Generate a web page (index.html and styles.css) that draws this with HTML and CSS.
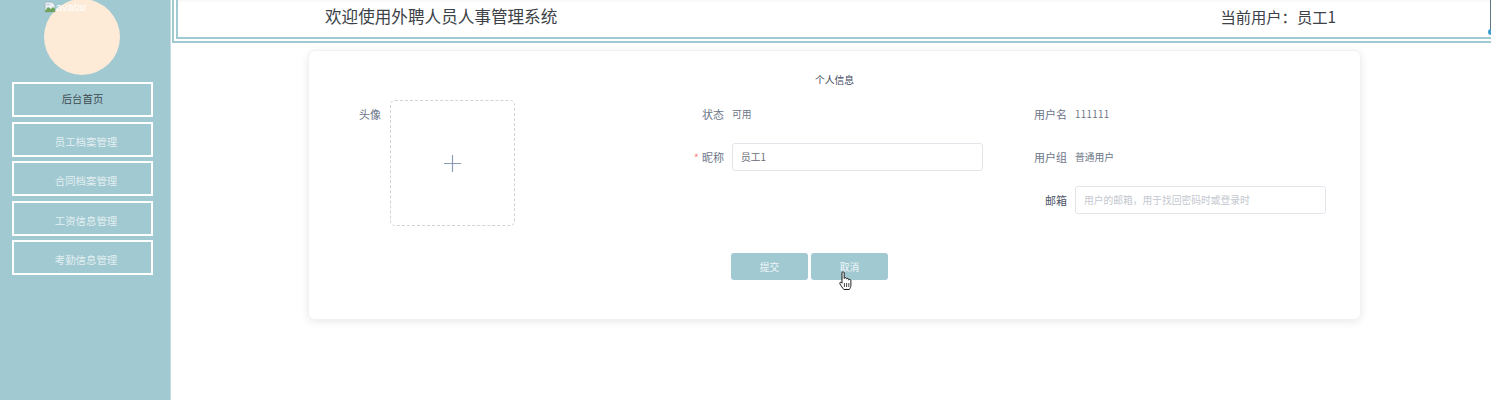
FILE: index.html
```html
<!DOCTYPE html>
<html lang="zh-CN">
<head>
<meta charset="utf-8">
<title>外聘人员人事管理系统</title>
<link rel="stylesheet" href="styles.css">
</head>
<body>
<div class="layout">
  <aside class="sidebar">
    <div class="avatar">
      <span class="alt">
        <svg class="alt-icon" width="12" height="12" viewBox="0 0 12 12"><path d="M1 1h7l3 3v7H1z" fill="#e8eef2" stroke="#9fb0b8" stroke-width=".8"/><path d="M1 10l3-4 3 2 2-2 2 2v3H1z" fill="#6ea35c"/><path d="M2 4c1-1.500 3-1.500 4 0z" fill="#9cc0e6"/></svg>avatar
      </span>
    </div>
    <nav class="menu">
      <a class="menu-item home">后台首页</a>
      <a class="menu-item">员工档案管理</a>
      <a class="menu-item">合同档案管理</a>
      <a class="menu-item">工资信息管理</a>
      <a class="menu-item">考勤信息管理</a>
    </nav>
  </aside>
  <main class="main">
    <header class="header">
      <span class="welcome">欢迎使用外聘人员人事管理系统</span>
      <span class="user">当前用户：员工1</span>
      <i class="edge"></i>
      <i class="dot"></i>
    </header>
    <section class="card">
      <h2 class="card-title">个人信息</h2>
      <form class="form">
        <div class="field upload-field">
          <label class="label">头像</label>
          <div class="upload">
            <svg width="17" height="17" viewBox="0 0 17 17"><path d="M8.500 0v17M0 8.500h17" stroke="#8c9db5" stroke-width="1.200" fill="none"/></svg>
          </div>
        </div>
        <div class="field">
          <label class="label">状态</label>
          <span class="value">可用</span>
        </div>
        <div class="field">
          <label class="label">用户名</label>
          <span class="value digits">111111</span>
        </div>
        <div class="field">
          <label class="label required">昵称</label>
          <input class="input" value="员工1">
        </div>
        <div class="field">
          <label class="label">用户组</label>
          <span class="value">普通用户</span>
        </div>
        <div class="field email">
          <label class="label">邮箱</label>
          <input class="input" placeholder="用户的邮箱，用于找回密码时或登录时">
        </div>
      </form>
      <div class="actions">
        <button class="btn" type="button">提交</button>
        <button class="btn" type="button">取消</button>
      </div>
    </section>
  </main>
</div>
<svg class="cursor" width="15" height="21" viewBox="0 0 15 21"><path d="M3 1.800c0-1.300 2.200-1.300 2.200 0v5.700c.2-1.200 2.200-1.200 2.300.1v.5c.3-1 2.100-.9 2.200.3v.6c.4-.9 2.100-.7 2.200.6v4.600c0 1.900-.8 3-1.600 4.300H4.800C3.800 17.300 1.900 14.800.9 12.800c-.6-1.300.9-2.200 1.700-1.200l.4.600z" fill="#fff" stroke="#1c1c1c" stroke-width="1" stroke-linejoin="round"/><path d="M5.400 12v4M7.600 12v4M9.800 12v4" stroke="#1c1c1c" stroke-width=".8"/></svg>
</body>
</html>
```
FILE: styles.css
```css
* { box-sizing: border-box; }
html, body { margin: 0; height: 100%; overflow: hidden; background: #fff; }
body { font-family: "Noto Sans CJK SC", "Noto Sans", sans-serif; color: #606266; }

.layout { display: flex; height: 400px; }

.sidebar {
  width: 171px;
  flex: none;
  background: #a1c9d1;
  border-right: 1px solid #c5dde2;
}
.avatar {
  position: relative;
  width: 76px;
  height: 76px;
  margin: -1px 0 0 44px;
  border-radius: 50%;
  background: #fdebd8;
}
.alt {
  position: absolute;
  left: 0;
  top: 2px;
  display: flex;
  align-items: center;
  font: 11px/12px "Liberation Sans", sans-serif;
  color: #fff;
}
.alt-icon { flex: none; }

.menu { display: flex; flex-direction: column; gap: 4.500px; margin: 7px 0 0 12px; }
.menu-item {
  width: 141px;
  height: 35px;
  border: 2px solid #fff;
  padding: 10px 0 0 7px;
  font-size: 10.400px;
  line-height: 16px;
  text-align: center;
  color: rgba(255, 255, 255, .72);
}
.menu-item.home { padding: 7px 0 0; color: #3d4a4f; }

.main { flex: 1; min-width: 0; }

.header {
  position: relative;
  display: flex;
  justify-content: space-between;
  height: 43px;
  margin-left: 1px;
  padding: 0 155px 6px 147px;
  align-items: center;
  border-left: 6px double #a1c9d1;
  border-bottom: 6px double #a1c9d1;
  box-shadow: inset 0 2px #fafafa;
  font-size: 16.600px;
  color: #3c4248;
}
.user { font-size: 15.300px; }
.edge {
  position: absolute;
  right: 0;
  top: 0;
  width: 1px;
  height: 30px;
  background: #5f7580;
}
.dot {
  position: absolute;
  right: -3px;
  top: 29px;
  width: 6px;
  height: 6px;
  border-radius: 50%;
  background: #3d9bd1;
}

.card {
  width: 1053px;
  height: 270px;
  margin: 7px 0 0 137px;
  padding-top: 23px;
  background: #fff;
  border: 1px solid #f1f2f4;
  border-radius: 7px;
  box-shadow: 0 2px 8px rgba(0, 0, 0, .09);
}
.card-title {
  margin: 0;
  height: 13px;
  font-size: 9.750px;
  line-height: 13px;
  font-weight: 400;
  color: #3d465a;
  text-align: center;
}

.form {
  display: grid;
  grid-template-columns: 343px 343px 307px;
  grid-auto-rows: 28px;
  row-gap: 15px;
  margin: 13px 0 0 24px;
}
.field { display: flex; align-items: center; gap: 8px; }
.upload-field { grid-row: span 3; align-items: flex-start; gap: 9px; }
.email { grid-column: 3; }

.label {
  position: relative;
  width: 48px;
  flex: none;
  text-align: right;
  font-size: 11px;
  line-height: 28px;
  color: #6b7488;
}
.email .label { color: #4e5566; }
.required::before {
  content: "*";
  position: absolute;
  right: 25px;
  top: 0;
  color: #f78989;
}
.value { font-size: 9.750px; color: #6b7585; }
.digits { letter-spacing: .35px; }

.upload {
  width: 125px;
  height: 126px;
  flex: none;
  display: flex;
  align-items: center;
  justify-content: center;
  border: 1px dashed #d0d3d9;
  border-radius: 5px;
}
.input {
  width: 251px;
  height: 28px;
  padding: 0 8px;
  font: 9.750px "Noto Sans CJK SC", sans-serif;
  color: #6a6d73;
  background: #fff;
  border: 1px solid #e2e5ea;
  border-radius: 3px;
  outline: none;
}
.input::placeholder { color: #c4c8cf; opacity: 1; }

.actions { display: flex; gap: 3px; margin: 39px 0 0 422px; }
.btn {
  width: 77px;
  height: 27px;
  padding: 0;
  font: 9.750px "Noto Sans CJK SC", sans-serif;
  color: rgba(255, 255, 255, .85);
  background: #a1c9d1;
  border: 0;
  border-radius: 3px;
}

.cursor { position: absolute; left: 839px; top: 271px; }
```
